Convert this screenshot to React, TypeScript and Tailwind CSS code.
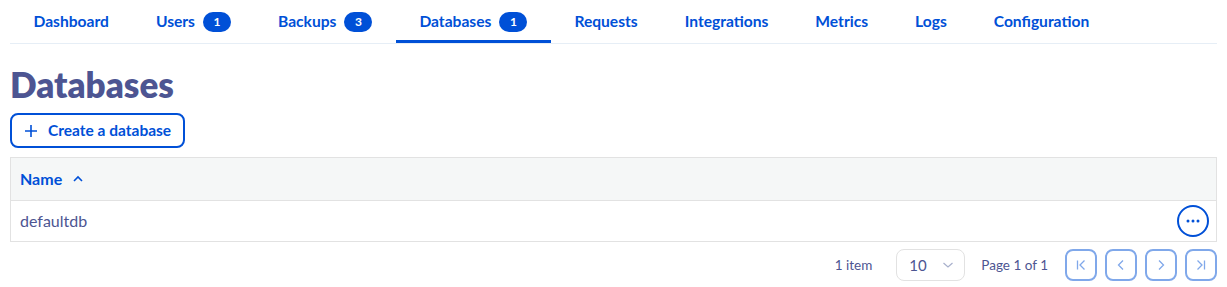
import React from "react";

const BLUE = "#0050d7";

function Badge({ n }: { n: number }) {
  return (
    <span className="ml-2 inline-flex h-[20px] min-w-[28px] items-center justify-center rounded-full bg-[#0050d7] px-2 text-[12px] font-bold leading-none text-white">
      {n}
    </span>
  );
}

const tabs: { label: string; badge?: number; active?: boolean }[] = [
  { label: "Dashboard" },
  { label: "Users", badge: 1 },
  { label: "Backups", badge: 3 },
  { label: "Databases", badge: 1, active: true },
  { label: "Requests" },
  { label: "Integrations" },
  { label: "Metrics" },
  { label: "Logs" },
  { label: "Configuration" },
];

function PagerBtn({ children }: { children: React.ReactNode }) {
  return (
    <button className="flex h-[32px] w-[32px] items-center justify-center rounded-[8px] border-2 border-[#80a8ea] bg-white text-[#80a8ea]">
      {children}
    </button>
  );
}

export default function App() {
  return (
    <div
      className="w-[1227px] bg-white px-[10px] text-[16px]"
      style={{ fontFamily: "Lato, 'Noto Sans', sans-serif" }}
    >
      <nav className="flex h-[44px] items-stretch border-b border-[#e6eef6]">
        {tabs.map((t) => (
          <div
            key={t.label}
            className={`flex items-center px-[23.5px] text-[15.6px] font-bold text-[#0050d7] ${
              t.active ? "border-b-[3px] border-[#0050d7] pt-[3px]" : ""
            }`}
          >
            <span>{t.label}</span>
            {t.badge !== undefined && <Badge n={t.badge} />}
          </div>
        ))}
      </nav>

      <h1 className="mt-[18px] text-[35px] font-extrabold leading-[44px] text-[#4d5592]">
        Databases
      </h1>

      <button className="mt-[7px] flex h-[35px] items-center gap-[10px] rounded-[8px] border-2 border-[#0050d7] px-[12px] text-[15.5px] font-bold text-[#0050d7]">
        <svg width="14" height="14" viewBox="0 0 14 14" fill="none">
          <path d="M7 1v12M1 7h12" stroke={BLUE} strokeWidth="1.6" />
        </svg>
        <span>Create a database</span>
      </button>

      <div className="mt-[9px] border border-[#e2e2e2]">
        <div className="flex h-[43px] items-center gap-[10px] border-b border-[#e2e2e2] bg-[#f5f7f7] px-[9px] font-bold text-[#0050d7]">
          <span>Name</span>
          <svg width="12" height="8" viewBox="0 0 12 8" fill="none">
            <path d="M2 6l4-4 4 4" stroke={BLUE} strokeWidth="1.6" />
          </svg>
        </div>
        <div className="flex h-[40px] items-center justify-between pl-[9px] pr-[7px] text-[#4d5592]">
          <span>defaultdb</span>
          <button className="flex h-[32px] w-[32px] items-center justify-center rounded-full border-2 border-[#0050d7]">
            <svg width="14" height="4" viewBox="0 0 14 4">
              <circle cx="2" cy="2" r="1.5" fill={BLUE} />
              <circle cx="7" cy="2" r="1.5" fill={BLUE} />
              <circle cx="12" cy="2" r="1.5" fill={BLUE} />
            </svg>
          </button>
        </div>
      </div>

      <div className="flex h-[46px] items-center justify-end text-[13.5px] text-[#4d5592]">
        <span className="mr-[24px]">1 item</span>
        <div className="mr-[16px] flex h-[32px] w-[69px] items-center justify-between rounded-[8px] border border-[#e2e2e2] pl-[12px] pr-[10px] text-[15px]">
          <span>10</span>
          <svg width="12" height="8" viewBox="0 0 12 8" fill="none">
            <path d="M1.5 2l4.5 4 4.5-4" stroke="#a8b0cc" strokeWidth="1.2" />
          </svg>
        </div>
        <span className="mr-[17px]">Page 1 of 1</span>
        <div className="flex gap-[8px]">
          <PagerBtn>
            <svg width="12" height="12" viewBox="0 0 12 12" fill="none">
              <path d="M2.5 1.5v9M9.5 1.5L5 6l4.5 4.5" stroke="currentColor" strokeWidth="1.3" />
            </svg>
          </PagerBtn>
          <PagerBtn>
            <svg width="12" height="12" viewBox="0 0 12 12" fill="none">
              <path d="M8 1.5L3.5 6 8 10.5" stroke="currentColor" strokeWidth="1.3" />
            </svg>
          </PagerBtn>
          <PagerBtn>
            <svg width="12" height="12" viewBox="0 0 12 12" fill="none">
              <path d="M4 1.5L8.5 6 4 10.5" stroke="currentColor" strokeWidth="1.3" />
            </svg>
          </PagerBtn>
          <PagerBtn>
            <svg width="12" height="12" viewBox="0 0 12 12" fill="none">
              <path d="M9.5 1.5v9M2.5 1.5L7 6l-4.5 4.5" stroke="currentColor" strokeWidth="1.3" />
            </svg>
          </PagerBtn>
        </div>
      </div>
    </div>
  );
}
